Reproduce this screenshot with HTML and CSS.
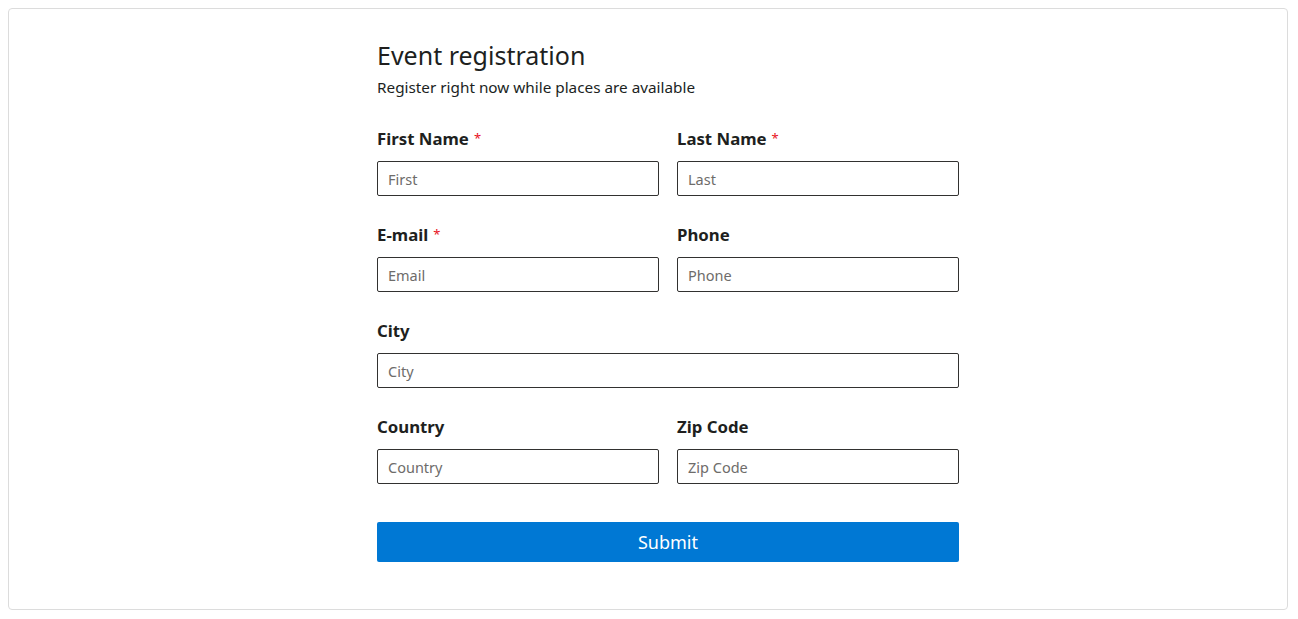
FILE: index.html
```html
<!DOCTYPE html>
<html>
<head>
<meta charset="utf-8">
<link rel="stylesheet" href="styles.css">
</head>
<body>
<div class="card">
  <form class="form">
    <h1 class="title">Event registration</h1>
    <p class="subtitle">Register right now while places are available</p>
    <div class="row">
      <div class="field">
        <label class="label">First Name <span class="req">*</span></label>
        <input class="input" placeholder="First">
      </div>
      <div class="field">
        <label class="label">Last Name <span class="req">*</span></label>
        <input class="input" placeholder="Last">
      </div>
    </div>
    <div class="row">
      <div class="field">
        <label class="label">E-mail <span class="req">*</span></label>
        <input class="input" placeholder="Email">
      </div>
      <div class="field">
        <label class="label">Phone</label>
        <input class="input" placeholder="Phone">
      </div>
    </div>
    <div class="row">
      <div class="field">
        <label class="label">City</label>
        <input class="input" placeholder="City">
      </div>
    </div>
    <div class="row">
      <div class="field">
        <label class="label">Country</label>
        <input class="input" placeholder="Country">
      </div>
      <div class="field">
        <label class="label">Zip Code</label>
        <input class="input" placeholder="Zip Code">
      </div>
    </div>
    <button type="button" class="submit">Submit</button>
  </form>
</div>
</body>
</html>
```
FILE: styles.css
```css
* { box-sizing: border-box; }
body {
  margin: 8px;
  font-family: "Noto Sans", "Open Sans", sans-serif;
  color: #201f1e;
  background: #fff;
}
.card {
  width: 1280px;
  border: 1px solid #dcdcdc;
  border-radius: 4px;
  height: 602px;
  padding: 30px 0 0 368px;
}
.form {
  width: 582px;
  display: flex;
  flex-direction: column;
}
.title {
  margin: 0;
  font-size: 25px;
  font-weight: 400;
  line-height: 32px;
  color: #201f1e;
}
.subtitle {
  margin: 6px 0 0;
  font-size: 15.3px;
  line-height: 20px;
}
.row {
  display: flex;
  gap: 18px;
  margin-top: 31px;
}
.row + .row { margin-top: 28px; }
.field {
  flex: 1;
  display: flex;
  flex-direction: column;
}
.label {
  display: flex;
  align-items: center;
  gap: 5px;
  height: 22px;
  font-size: 16.8px;
  font-weight: 700;
  line-height: 22px;
  margin-bottom: 11px;
}
.req {
  color: #e81123;
  font-weight: 400;
  font-size: 13px;
  line-height: 13px;
  position: relative;
  top: -1px;
}
.input {
  height: 35px;
  border: 1px solid #323130;
  border-radius: 2px;
  padding: 0 10px;
  font-family: inherit;
  font-size: 14.5px;
  color: #201f1e;
}
.input::placeholder { color: #6e6c6a; }
.submit {
  margin-top: 38px;
  height: 40px;
  border: none;
  border-radius: 2px;
  background: #0078d4;
  color: #fff;
  font-family: inherit;
  font-size: 18px;
}
```
